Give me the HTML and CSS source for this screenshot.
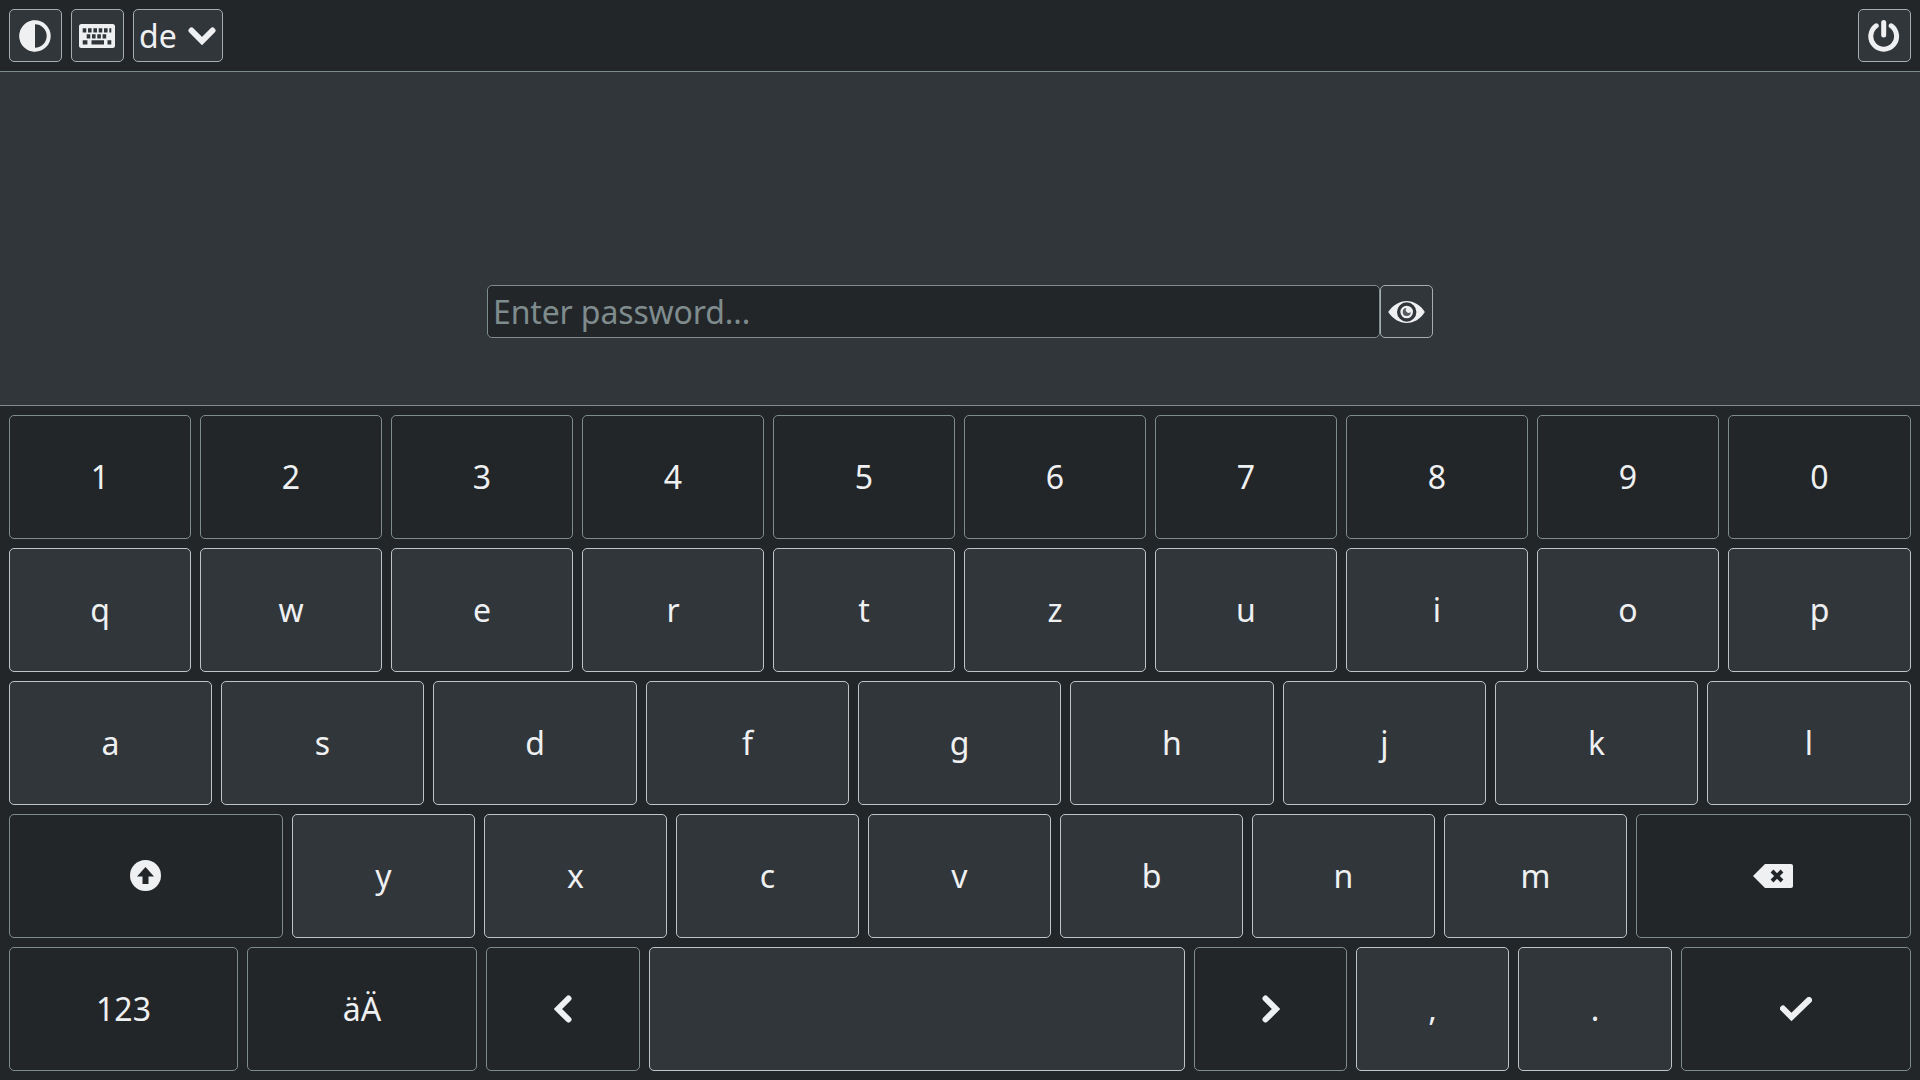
FILE: index.html
```html
<!DOCTYPE html>
<html lang="de">
<head>
<meta charset="utf-8">
<title>Login</title>
<link rel="stylesheet" href="styles.css">
</head>
<body>
<header class="topbar">
  <button class="tool"><svg width="33" height="33" viewBox="0 0 33 33"><circle cx="16" cy="17" r="13.700" fill="none" stroke="#eff0f1" stroke-width="4"/><path d="M16 1.500a15.500 15.500 0 0 0 0 31z" fill="#eff0f1"/></svg></button>
  <button class="tool"><svg width="37" height="25" viewBox="0 -1 37 25"><path fill="#eff0f1" fill-rule="evenodd" d="M2.500 0h31a2.500 2.500 0 0 1 2.500 2.500v19a2.500 2.500 0 0 1-2.500 2.500h-31a2.500 2.500 0 0 1-2.500-2.500v-19a2.500 2.500 0 0 1 2.500-2.500zM3.700 4.300v4.300h3.600V4.300zM9 4.300v4.300h3.600V4.300zM14.400 4.300v4.300h3.600V4.300zM19.700 4.300v4.300h3.600V4.300zM25 4.300v4.300h3.600V4.300zM30.300 4.300v4.300h2V4.300zM7.700 10.300v4.300h3.600v-4.300zM13 10.300v4.300h3.600v-4.300zM18.300 10.300v4.300h3.600v-4.300zM23.600 10.300v4.300h3.600v-4.300zM3.700 16.300v4.300h4.700v-4.300zM12.500 16.300v4.300h12.500v-4.300zM28.500 16.300v4.300h3.800v-4.300z"/></svg></button>
  <button class="tool lang"><span>de</span><svg width="28" height="18" viewBox="0 0 28 18"><path d="M3.500 3.500 14 14 24.500 3.500" fill="none" stroke="#eff0f1" stroke-width="6" stroke-linecap="round"/></svg></button>
  <button class="tool power"><svg width="33" height="33" viewBox="0 0 33 33"><path d="M8.200 6.800A12.900 12.900 0 1 0 23.200 6.800" fill="none" stroke="#eff0f1" stroke-width="5" stroke-linecap="round"/><path d="M15.700 3.500V16" fill="none" stroke="#eff0f1" stroke-width="5" stroke-linecap="round"/></svg></button>
</header>
<main class="panel">
  <div class="login">
    <input class="password" type="text" placeholder="Enter password...">
    <button class="eye"><svg width="37" height="23" viewBox="0 0 37 23"><path d="M.2 12C5 5 11.500 1 18.700 1s13.700 4 18.100 11C32.400 19 25.900 23 18.700 23S5 19 .2 12z" fill="#eff0f1"/><circle cx="18.700" cy="12" r="8" fill="none" stroke="#31363b" stroke-width="3.400"/><path d="M18.700 8a4 4 0 1 0 4 4 2.600 2.600 0 0 1-4-4z" fill="#31363b" opacity=".8"/></svg></button>
  </div>
</main>
<section class="keyboard">
  <div class="row row-ten">
    <button class="key dark">1</button><button class="key dark">2</button><button class="key dark">3</button><button class="key dark">4</button><button class="key dark">5</button><button class="key dark">6</button><button class="key dark">7</button><button class="key dark">8</button><button class="key dark">9</button><button class="key dark">0</button>
  </div>
  <div class="row row-ten">
    <button class="key">q</button><button class="key">w</button><button class="key">e</button><button class="key">r</button><button class="key">t</button><button class="key">z</button><button class="key">u</button><button class="key">i</button><button class="key">o</button><button class="key">p</button>
  </div>
  <div class="row row-nine">
    <button class="key">a</button><button class="key">s</button><button class="key">d</button><button class="key">f</button><button class="key">g</button><button class="key">h</button><button class="key">j</button><button class="key">k</button><button class="key">l</button>
  </div>
  <div class="row row-shift">
    <button class="key dark"><svg width="32" height="32" viewBox="0 0 32 32"><circle cx="15.500" cy="15.500" r="15.500" fill="#eff0f1"/><path d="M15.500 7 24 16.500H18.500V24H12.500V16.500H7z" fill="#232629"/></svg></button>
    <button class="key">y</button><button class="key">x</button><button class="key">c</button><button class="key">v</button><button class="key">b</button><button class="key">n</button><button class="key">m</button>
    <button class="key dark"><svg width="41" height="24" viewBox="0 0 41 24"><path d="M12 0h26a2 2 0 0 1 2 2v20a2 2 0 0 1-2 2H12L0 12z" fill="#eff0f1"/><path d="M19 7 29 17M29 7 19 17" fill="none" stroke="#232629" stroke-width="4"/></svg></button>
  </div>
  <div class="row row-bottom">
    <button class="key dark">123</button>
    <button class="key dark">äÄ</button>
    <button class="key dark"><svg width="18" height="28" viewBox="0 0 18 28"><path d="M14.500 3.500 4 14 14.500 24.500" fill="none" stroke="#eff0f1" stroke-width="6" stroke-linecap="round"/></svg></button>
    <button class="key"></button>
    <button class="key dark"><svg width="18" height="28" viewBox="0 0 18 28"><path d="M3.500 3.500 14 14 3.500 24.500" fill="none" stroke="#eff0f1" stroke-width="6" stroke-linecap="round"/></svg></button>
    <button class="key">,</button>
    <button class="key">.</button>
    <button class="key dark"><svg width="32" height="24" viewBox="0 0 32 24"><path d="M3 11.500 11.500 20 29 3" fill="none" stroke="#eff0f1" stroke-width="6" stroke-linecap="round"/></svg></button>
  </div>
</section>
</body>
</html>
```
FILE: styles.css
```css
* { box-sizing: border-box; }
html, body { height: 100%; }
body {
  margin: 0;
  display: flex;
  flex-direction: column;
  background: #232629;
  color: #eff0f1;
  font-family: "Noto Sans", sans-serif;
}
button {
  font-family: inherit;
  color: inherit;
  padding: 0;
}
svg { display: block; }
.topbar {
  display: flex;
  gap: 9px;
  height: 72px;
  padding: 9px;
  background: #232629;
  border-bottom: 1px solid #7f8c8d;
}
.tool {
  display: flex;
  align-items: center;
  justify-content: center;
  width: 53px;
  height: 53px;
  background: #31363b;
  border: 1px solid #a6adb0;
  border-radius: 5px;
}
.lang {
  width: 90px;
  justify-content: flex-start;
  gap: 11px;
  padding-left: 5px;
  font-size: 32px;
}
.power { margin-left: auto; }
.panel {
  display: flex;
  justify-content: center;
  height: 334px;
  padding-top: 213px;
  background: #31363b;
  border-bottom: 1px solid #7f8c8d;
}
.login { display: flex; height: 53px; }
.password {
  width: 893px;
  height: 53px;
  padding: 0 5px;
  background: #232629;
  border: 1px solid #7f8c8d;
  border-radius: 5px;
  color: #eff0f1;
  font: 32px "Noto Sans", sans-serif;
  outline: none;
}
.password::placeholder { color: #7f8c8d; opacity: 1; letter-spacing: -0.14px; }
.eye {
  display: flex;
  align-items: center;
  justify-content: center;
  width: 53px;
  height: 53px;
  background: #31363b;
  border: 1px solid #a6adb0;
  border-radius: 5px;
}
.keyboard {
  flex: 1;
  display: flex;
  flex-direction: column;
  gap: 9px;
  padding: 9px;
}
.row { flex: 1; display: grid; column-gap: 9px; }
.row-ten { grid-template-columns: repeat(9, 182px) 183px; }
.row-nine { grid-template-columns: 203px 203px 204px 203px 203px 204px 203px 203px 204px; }
.row-shift { grid-template-columns: 274px repeat(7, 183px) 275px; }
.row-bottom { grid-template-columns: 229px 230px 154px 536px 153px 153px 154px 230px; }
.key {
  min-width: 0;
  display: flex;
  align-items: center;
  justify-content: center;
  padding-bottom: 2px;
  background: #31363b;
  border: 1px solid #bdc3c7;
  border-radius: 5px;
  font-size: 32px;
}
.key svg { margin-top: 2px; }
.dark { background: #232629; border-color: #7f8c8d; }
```
